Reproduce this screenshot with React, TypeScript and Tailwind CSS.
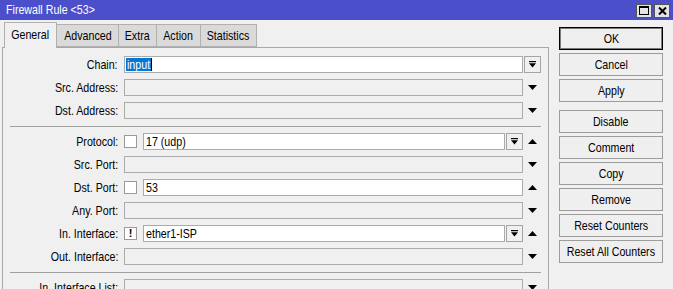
import React from "react";

const FONT = "font-['Liberation_Sans',Arial,sans-serif]";

function T({ children, o = "c" }: { children: React.ReactNode; o?: "l" | "r" | "c" }) {
  const origin = o === "l" ? "origin-left" : o === "r" ? "origin-right" : "origin-center";
  return <span className={`inline-block whitespace-nowrap scale-x-[0.82] ${origin}`}>{children}</span>;
}

function Down() {
  return (
    <svg width="9" height="5" viewBox="0 0 9 5">
      <path d="M0 0h9L4.5 5z" fill="#000" />
    </svg>
  );
}
function Up() {
  return (
    <svg width="9" height="5" viewBox="0 0 9 5">
      <path d="M0 5h9L4.5 0z" fill="#000" />
    </svg>
  );
}

function DropBtn() {
  return (
    <div className="ml-px w-[17px] h-[17px] border border-[#a5a5a5] bg-[#f0f0f0] flex items-center justify-center">
      <svg width="7" height="7" viewBox="0 0 7 7">
        <rect x="0" y="0" width="7" height="1.2" fill="#000" />
        <path d="M0 2.2h7L3.5 6.5z" fill="#000" />
      </svg>
    </div>
  );
}

function Check({ bang }: { bang?: boolean }) {
  return (
    <div className="w-[13px] h-[13px] border border-[#9a9a9a] bg-white flex items-center justify-center text-[11px] font-bold leading-none shrink-0">
      {bang ? "!" : ""}
    </div>
  );
}

type RowProps = {
  label: string;
  kind: "disabled" | "chain" | "check" | "checkdrop";
  value?: string;
  arrow?: "up" | "down" | "none";
  bang?: boolean;
  cls?: string;
};

function Row({ label, kind, value, arrow = "down", bang, cls = "mt-[6px]" }: RowProps) {
  let field: React.ReactNode;
  if (kind === "disabled") {
    field = <div className="w-[399px] h-[17px] border border-[#ababab] bg-[#f0f0f0]" />;
  } else if (kind === "chain") {
    field = (
      <div className="w-[399px] h-[17px] border border-[#ababab] bg-white flex items-center pl-px">
        <span className="bg-[#0078d7] text-white leading-[13px] h-[13px] w-[25px] overflow-hidden pl-px">
          <T o="l">{value}</T>
        </span>
        <span className="w-px h-[13px] bg-black" />
      </div>
    );
  } else {
    field = (
      <div className="w-[399px] h-[17px] flex items-center">
        <Check bang={bang} />
        <div className="ml-[6px] flex-1 h-[17px] border border-[#ababab] bg-white flex items-center pl-[2px] leading-[15px]">
          <T o="l">{value}</T>
        </div>
        {kind === "checkdrop" && <DropBtn />}
      </div>
    );
  }
  return (
    <div className={`flex items-center h-[17px] ${cls}`}>
      <div className="w-[116px] text-right pr-[1px] leading-[17px] whitespace-nowrap">
        <T o="r">{label}</T>
      </div>
      <div className="ml-[5px]">{field}</div>
      <div className="w-[18px] h-[17px] flex items-center justify-center">
        {kind === "chain" ? <DropBtn /> : arrow === "up" ? <Up /> : arrow === "down" ? <Down /> : null}
      </div>
    </div>
  );
}

function Sep() {
  return <div className="mt-[7px] ml-[7px] w-[531px] h-px bg-[#a0a0a0]" />;
}

function Btn({ label, ok, cls = "mt-[3px]" }: { label: string; ok?: boolean; cls?: string }) {
  return (
    <div
      className={`w-[104px] h-[23px] flex items-center justify-center border ${
        ok ? "border-black shadow-[inset_0_0_0_1px_#7a7a7a]" : "border-[#9c9c9c]"
      } bg-[#efefef] ${cls}`}
    >
      <T>{label}</T>
    </div>
  );
}

export default function App() {
  const tabs = ["Advanced", "Extra", "Action", "Statistics"];
  const tabW = ["w-[62px]", "w-[38px]", "w-[44px]", "w-[56px]"];
  return (
    <div className={`w-[673px] h-[289px] overflow-hidden bg-[#f0f0f0] text-[13px] text-black ${FONT}`}>
      {/* title bar */}
      <div className="h-[20px] bg-[#4b4fc9] flex items-center pl-[6px] pr-[3px]">
        <div className="text-white flex-1 leading-[20px]">
          <T o="l">Firewall Rule &lt;53&gt;</T>
        </div>
        <div className="flex gap-[2px] mt-px">
          <div className="w-[16px] h-[14px] bg-[#e4e4e4] border border-[#555] flex items-center justify-center">
            <div className="w-[10px] h-[9px] border border-black border-t-2" />
          </div>
          <div className="w-[16px] h-[14px] bg-[#e4e4e4] border border-[#555] flex items-center justify-center">
            <svg width="9" height="8" viewBox="0 0 9 8">
              <path d="M1 0.5L8 7.5M8 0.5L1 7.5" stroke="#000" strokeWidth="2" />
            </svg>
          </div>
        </div>
      </div>

      <div className="flex">
        {/* left */}
        <div className="w-[549px] pl-[2px]">
          <div className="flex items-end h-[27px] pl-[2px]">
            <div className="w-[53px] h-[26px] border border-b-0 border-[#b0b0b0] bg-[#f0f0f0] flex items-center justify-center pb-[2px] relative z-10 -mb-px">
              <T>General</T>
            </div>
            {tabs.map((t, i) => (
              <div
                key={t}
                className={`${tabW[i]} h-[23px] border border-l-0 border-[#b0b0b0] bg-[#dadada] flex items-center justify-center`}
              >
                <T>{t}</T>
              </div>
            ))}
          </div>
          <div className="h-[300px] border-l border-t border-r border-[#a8a8a8] pt-[8px]">
            <Row label="Chain:" kind="chain" value="input" cls="" />
            <Row label="Src. Address:" kind="disabled" />
            <Row label="Dst. Address:" kind="disabled" />
            <Sep />
            <Row label="Protocol:" kind="checkdrop" value="17 (udp)" arrow="up" />
            <Row label="Src. Port:" kind="disabled" />
            <Row label="Dst. Port:" kind="check" value="53" arrow="up" />
            <Row label="Any. Port:" kind="disabled" />
            <Row label="In. Interface:" kind="checkdrop" value="ether1-ISP" arrow="up" bang />
            <Row label="Out. Interface:" kind="disabled" />
            <Sep />
            <Row label="In. Interface List:" kind="disabled" />
          </div>
        </div>

        {/* right buttons */}
        <div className="ml-[10px] flex flex-col">
          <Btn label="OK" ok cls="mt-[7px]" />
          <Btn label="Cancel" />
          <Btn label="Apply" />
          <Btn label="Disable" cls="mt-[8px]" />
          <Btn label="Comment" />
          <Btn label="Copy" />
          <Btn label="Remove" />
          <Btn label="Reset Counters" />
          <Btn label="Reset All Counters" />
        </div>
      </div>
    </div>
  );
}
